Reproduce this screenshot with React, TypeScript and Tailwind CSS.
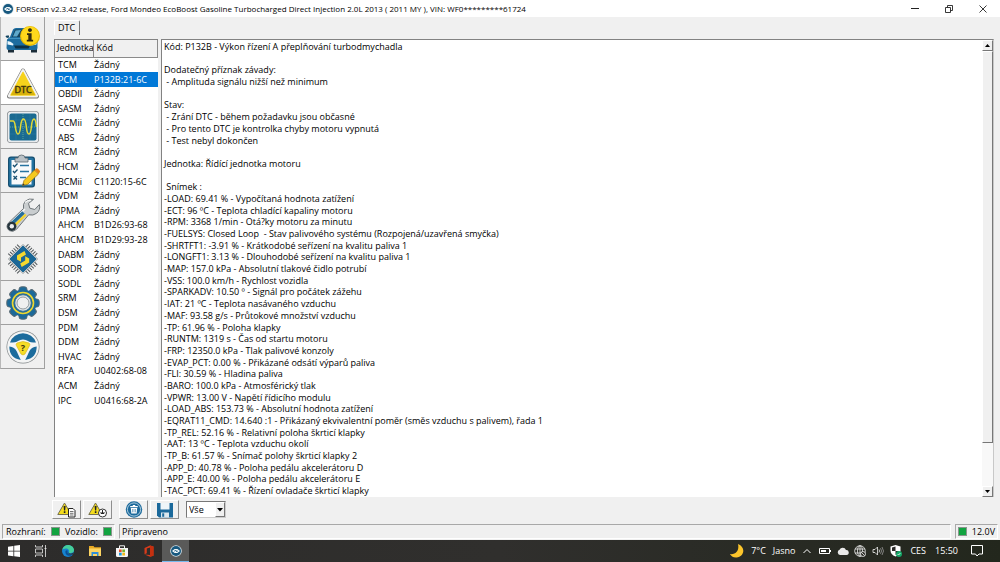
import type { ReactNode } from 'react';

import clsx from 'clsx';

const units: [string, string][] = [
  ['TCM', 'Žádný'],
  ['PCM', 'P132B:21-6C'],
  ['OBDII', 'Žádný'],
  ['SASM', 'Žádný'],
  ['CCMii', 'Žádný'],
  ['ABS', 'Žádný'],
  ['RCM', 'Žádný'],
  ['HCM', 'Žádný'],
  ['BCMii', 'C1120:15-6C'],
  ['VDM', 'Žádný'],
  ['IPMA', 'Žádný'],
  ['AHCM', 'B1D26:93-68'],
  ['AHCM', 'B1D29:93-28'],
  ['DABM', 'Žádný'],
  ['SODR', 'Žádný'],
  ['SODL', 'Žádný'],
  ['SRM', 'Žádný'],
  ['DSM', 'Žádný'],
  ['PDM', 'Žádný'],
  ['DDM', 'Žádný'],
  ['HVAC', 'Žádný'],
  ['RFA', 'U0402:68-08'],
  ['ACM', 'Žádný'],
  ['IPC', 'U0416:68-2A'],
];

const report = [
  'Kód: P132B - Výkon řízení A přeplňování turbodmychadla',
  '',
  'Dodatečný příznak závady:',
  ' - Amplituda signálu nižší než minimum',
  '',
  'Stav:',
  ' - Zrání DTC - během požadavku jsou občasné',
  ' - Pro tento DTC je kontrolka chyby motoru vypnutá',
  ' - Test nebyl dokončen',
  '',
  'Jednotka: Řídící jednotka motoru',
  '',
  ' Snímek :',
  '-LOAD: 69.41 % - Vypočítaná hodnota zatížení',
  '-ECT: 96 ºC - Teplota chladící kapaliny motoru',
  '-RPM: 3368 1/min - Otá?ky motoru za minutu',
  '-FUELSYS: Closed Loop  - Stav palivového systému (Rozpojená/uzavřená smyčka)',
  '-SHRTFT1: -3.91 % - Krátkodobé seřízení na kvalitu paliva 1',
  '-LONGFT1: 3.13 % - Dlouhodobé seřízení na kvalitu paliva 1',
  '-MAP: 157.0 kPa - Absolutní tlakové čidlo potrubí',
  '-VSS: 100.0 km/h - Rychlost vozidla',
  '-SPARKADV: 10.50 º - Signál pro počátek zážehu',
  '-IAT: 21 ºC - Teplota nasávaného vzduchu',
  '-MAF: 93.58 g/s - Průtokové množství vzduchu',
  '-TP: 61.96 % - Poloha klapky',
  '-RUNTM: 1319 s - Čas od startu motoru',
  '-FRP: 12350.0 kPa - Tlak palivové konzoly',
  '-EVAP_PCT: 0.00 % - Přikázané odsátí výparů paliva',
  '-FLI: 30.59 % - Hladina paliva',
  '-BARO: 100.0 kPa - Atmosférický tlak',
  '-VPWR: 13.00 V - Napětí řídicího modulu',
  '-LOAD_ABS: 153.73 % - Absolutní hodnota zatížení',
  '-EQRAT11_CMD: 14.640 :1 - Přikázaný ekvivalentní poměr (směs vzduchu s palivem), řada 1',
  '-TP_REL: 52.16 % - Relativní poloha škrticí klapky',
  '-AAT: 13 ºC - Teplota vzduchu okolí',
  '-TP_B: 61.57 % - Snímač polohy škrticí klapky 2',
  '-APP_D: 40.78 % - Poloha pedálu akcelerátoru D',
  '-APP_E: 40.00 % - Poloha pedálu akcelerátoru E',
  '-TAC_PCT: 69.41 % - Řízení ovladače škrticí klapky',
];

function AppLogo({ className }: { className?: string }) {
  return (
    <svg viewBox="0 0 12 12" className={className}>
      <circle cx="6" cy="6" r="5.8" fill="#d5e3ea" />
      <circle cx="6" cy="6" r="5" fill="#17587f" />
      <path d="M2 6 4.600 4h2.800L10 6 7.400 8H4.600z" fill="#f4f9fb" />
      <path d="M4 6h1.200l.7-1 .8 2 .6-1H8" fill="none" stroke="#17587f" strokeWidth=".7" />
    </svg>
  );
}

function CarIcon() {
  return (
    <svg viewBox="0 0 40 40" className="size-10">
      <path d="M5 29h6v4.500H5zM28 29h6v4.500h-6z" fill="#1b2c38" />
      <path d="M4 20.500 7 18l3-7.500Q11 9 13 9h13q2 0 3 2l3 7 2.500 3v8q0 2-2 2h-27q-2 0-2-2z" fill="#1c6c9f" />
      <path d="M2.500 17.500q0-1.500 3.500-1v2l-2 .500zM12 10.500h13l3 7.500H9z" fill="#12435f" />
      <path d="m12.600 11.500 5.400-.5-4 6.500H10z" fill="#5fa9cc" />
      <path d="M4.500 22q3 0 6 3l-.5 1.500-5.500-1zM33.500 22q-3 0-5.500 3l.5 1.500 5-1z" fill="#e8f6fc" />
      <path d="M11 26.500h16l-1.500 3h-13z" fill="#0d3147" />
      <path d="M6 19.500h26" stroke="#3f93c2" strokeWidth="1" />
      <circle cx="27" cy="17" r="10" fill="#e5b800" />
      <circle cx="27" cy="16.600" r="9" fill="#ffd91c" />
      <path d="M27 9.200a2 1.900 0 1 1-.1 0zM24 14.300h4.600v6.400h1.500V22.500h-6.300v-1.800h1.500v-4.600H24z" fill="#332c10" />
    </svg>
  );
}

function DtcIcon() {
  return (
    <svg viewBox="0 0 40 40" className="size-10">
      <path d="M20 7.500 34 33.500H6z" fill="#777" stroke="#777" strokeWidth="4" strokeLinejoin="round" />
      <path d="M20 7.500 33.800 33H6.200z" fill="#f2f2f0" stroke="#f2f2f0" strokeWidth="2.800" strokeLinejoin="round" />
      <path d="M20 9.500 32 32H8z" fill="#f6d21c" stroke="#f6d21c" strokeWidth="1.500" strokeLinejoin="round" />
      <path d="M12.800 23h14.400L32 32H8z" fill="#d9b30c" />
      <text x="20" y="30" textAnchor="middle" fontSize="9" fill="#3a330f" stroke="#3a330f" strokeWidth=".4">DTC</text>
    </svg>
  );
}

function WaveIcon() {
  return (
    <svg viewBox="0 0 40 40" className="size-10">
      <rect x="4" y="4" width="32" height="32" rx="4" fill="#6f7478" />
      <rect x="4.600" y="4.600" width="30.800" height="30.800" rx="3.500" fill="#e9ecee" />
      <rect x="6.500" y="6.500" width="27" height="27" rx="2" fill="#1a6a91" />
      <path d="M7 13h26M7 27h26M13 7v26M27 7v26" stroke="#2f7fa5" strokeWidth=".5" />
      <path d="M7 20h26M20 7v26" stroke="#67b29b" strokeWidth=".8" strokeDasharray="1 1" />
      <path d="M7 14h3c2 0 2 4 2.500 7s1 6 2.500 6 2-2 2.500-7 1-8 3-8 2.500 4 3 9 1 6 2.500 6 2-3 2.500-8 1-7 2.500-7 2 3 2.500 8" fill="none" stroke="#e4d936" strokeWidth="1.500" />
    </svg>
  );
}

function TestsIcon() {
  return (
    <svg viewBox="0 0 40 40" className="size-10">
      <rect x="5" y="5.500" width="27" height="31" rx="3" fill="#174f70" />
      <rect x="6.200" y="6.700" width="24.600" height="28.600" rx="2" fill="#2474a2" />
      <path d="M8.500 9h20v24.500h-20z" fill="#f8fafb" />
      <path d="M12 7h3q0-3 3.500-3T22 7h3v4H12z" fill="#b9c1c6" stroke="#59656c" strokeWidth=".8" />
      <path d="M17 14.500h9M17 20.500h9M17 26.500h6" stroke="#2673a0" strokeWidth="1.600" />
      <path d="m10 14 1.500 1.700 3-3.200M10 20l1.500 1.700 3-3.200M10.500 25l3.500 3.500M14 25l-3.500 3.500" fill="none" stroke="#174f70" strokeWidth="1.300" />
      <path d="m19.500 34.500 1.500-5L31.500 19l4 4L24.700 33.300z" fill="#f5c920" stroke="#946f12" strokeWidth=".7" />
      <path d="m31.500 19 1.500-1.400q1-.8 2 .2l1.600 1.600q1 1 0 2L35.500 23z" fill="#e78518" />
      <path d="m19.500 34.500.6-2.200 1.600 1.600z" fill="#333" />
    </svg>
  );
}

function WrenchIcon() {
  return (
    <svg viewBox="0 0 40 40" className="size-10">
      <path d="M30.500 4.300 25.500 8.500l1.300 4.700 5 1.300 4.600-5q1.300 5.500-2.700 8.700-3.600 2.800-8 1.600L13.500 34.300q-3.500 3.400-7.300 1.300-4-3.600-.8-7.600L20.500 13.500q-1-4.500 2-7.500 3.500-3 8-1.700z" fill="#c9cdcf" stroke="#70777b" strokeWidth="1" />
      <path d="M22 7.500q3-2.500 6-2M22 14 9 26.500" fill="none" stroke="#f6f7f7" strokeWidth="1.400" />
      <path d="M20.500 17.500 8 29.500" stroke="#266f9b" strokeWidth="3.600" />
      <path d="m22.800 19.500-12 11.800" stroke="#f2d22c" strokeWidth="2.400" />
      <circle cx="8.800" cy="31.300" r="4.600" fill="#25343d" />
      <circle cx="8.800" cy="31.300" r="2.200" fill="#eceeef" />
    </svg>
  );
}

function ChipIcon() {
  return (
    <svg viewBox="0 0 40 40" className="size-10">
      <path d="M6.500 16.500l10-10M23.500 6.500l10 10M6.500 23.500l10 10M23.500 33.500l10-10" stroke="#4f5558" strokeWidth="4.500" strokeDasharray="1 1.500" />
      <path d="M20 5.500 34.500 20 20 34.500 5.500 20z" fill="#f0f2f3" stroke="#8d9497" strokeWidth="1" strokeLinejoin="round" />
      <path d="M20 7 33 20 20 33 7 20z" fill="#1b6797" stroke="#1b6797" strokeWidth="1" strokeLinejoin="round" />
      <path d="m21.500 12-7.500 4.500v4l4 2.200v-4.200l5-3zM18.700 28l7.500-4.500v-4l-4-2.200v4.200l-5 3z" fill="#f5d92e" />
    </svg>
  );
}

function GearIcon() {
  return (
    <svg viewBox="0 0 40 40" className="size-10">
      {[0, 45, 90, 135].map((angle) => (
        <rect key={angle} x="16" y="3.800" width="8" height="32.400" rx="2.500" fill="#1d6a99" stroke="#596a74" strokeWidth="1" transform={`rotate(${angle} 20 20)`} />
      ))}
      <circle cx="20" cy="20" r="13.500" fill="#1d6a99" />
      <circle cx="20" cy="20" r="10.500" fill="none" stroke="#edd72f" strokeWidth="1.600" />
      <circle cx="20" cy="20" r="8.200" fill="#dfe4e7" stroke="#3c708e" strokeWidth=".8" />
      <circle cx="20" cy="20" r="6" fill="#f0f0f0" stroke="#7f888c" strokeWidth=".8" />
    </svg>
  );
}

function WheelIcon() {
  return (
    <svg viewBox="0 0 40 40" className="size-10">
      <circle cx="20" cy="20" r="16.500" fill="#818789" />
      <circle cx="20" cy="20" r="15.800" fill="#f4f5f5" />
      <path d="M7 15.500a13.800 13.800 0 0 1 26 0q-6 0-8-1.500t-5-1.500-5 1.500-8 1.500zM6.300 19.500q5.500.5 7.500 5t4 8.500q-11.500-2-11.500-13.500zM33.700 19.500q-5.500.5-7.500 5t-4 8.500q11.500-2 11.500-13.500z" fill="#1c6c9d" />
      <path d="M14 16q6-3 12 0 1.500 1 .6 2.600L22 27q-2 2-4 0l-4.600-8.400q-.9-1.600.6-2.600z" fill="#f6dc26" stroke="#d2b314" strokeWidth=".6" />
      <text x="20" y="24" textAnchor="middle" fontSize="9" fontWeight="700" fill="#3b3410">?</text>
    </svg>
  );
}

const tools: { label: string; icon: ReactNode }[] = [
  { label: 'Vozidlo', icon: <CarIcon /> },
  { label: 'DTC', icon: <DtcIcon /> },
  { label: 'Grafy', icon: <WaveIcon /> },
  { label: 'Testy', icon: <TestsIcon /> },
  { label: 'Servis', icon: <WrenchIcon /> },
  { label: 'Moduly', icon: <ChipIcon /> },
  { label: 'Nastavení', icon: <GearIcon /> },
  { label: 'Nápověda', icon: <WheelIcon /> },
];

function TitleBar() {
  return (
    <header className="flex h-[17px] shrink-0 items-center bg-white pl-0.5">
      <AppLogo className="size-3" />
      <h1 className="ml-0.5 flex-1 truncate text-[8px] leading-3">
        FORScan v2.3.42 release, Ford Mondeo EcoBoost Gasoline Turbocharged Direct Injection 2.0L 2013 ( 2011 MY ), VIN: WF0*********61724
      </h1>
      <button type="button" aria-label="Minimalizovat" className="flex h-full w-[34px] items-center justify-center">
        <svg viewBox="0 0 8 8" className="size-2"><path d="M0 3.500h8" stroke="#222" /></svg>
      </button>
      <button type="button" aria-label="Obnovit" className="flex h-full w-[33px] items-center justify-center">
        <svg viewBox="0 0 8 8" className="size-2" fill="none" stroke="#222" strokeWidth=".9"><path d="M.5 2.500h5v5h-5zM2.500 2.500v-2h5v5h-2" /></svg>
      </button>
      <button type="button" aria-label="Zavřít" className="flex h-full w-[35px] items-center justify-center">
        <svg viewBox="0 0 8 8" className="size-2"><path d="m.5.500 7 7m0-7-7 7" stroke="#222" strokeWidth=".9" /></svg>
      </button>
    </header>
  );
}

function Sidebar() {
  return (
    <nav className="flex w-[46px] shrink-0 flex-col">
      {tools.map((tool, i) => (
        <button
          key={tool.label}
          type="button"
          aria-label={tool.label}
          className={clsx(
            'flex h-11 w-[45px] items-center justify-center border-r border-b border-l border-r-[#a0a0a0] border-b-[#a0a0a0] border-l-[#b8b8b8]',
            i === 1 ? 'bg-white' : 'bg-[#f0f0f0]',
          )}
        >
          {tool.icon}
        </button>
      ))}
    </nav>
  );
}

function UnitTable() {
  return (
    <div className="w-[104px] shrink-0 overflow-hidden border-t border-l border-[#828282] bg-white">
      <table className="h-[368px] w-full table-fixed border-collapse text-left">
        <thead>
          <tr className="h-[17px] bg-[#f0f0f0]">
            <th className="w-[38px] overflow-hidden border-r border-b border-[#8a8a8a] p-0 pl-0.5 font-normal whitespace-nowrap">Jednotka</th>
            <th className="border-r border-b border-[#8a8a8a] p-0 pl-[3px] font-normal">Kód</th>
          </tr>
        </thead>
        <tbody>
          {units.map(([unit, code], i) => (
            <tr key={i} className={clsx(i === 1 && 'bg-[#0078d7] text-white')}>
              <td className="p-0 pl-[3px]">{unit}</td>
              <td className="p-0 pl-px whitespace-nowrap">{code}</td>
            </tr>
          ))}
        </tbody>
      </table>
    </div>
  );
}

function ScrollButton({ up }: { up?: boolean }) {
  return (
    <button
      type="button"
      aria-label={up ? 'Nahoru' : 'Dolů'}
      className="flex h-[11px] shrink-0 items-center justify-center border border-t-white border-r-[#777] border-b-[#777] border-l-white bg-[#f0f0f0]"
    >
      <svg viewBox="0 0 5 3" className="h-[3px] w-[5px]"><path d={up ? 'M0 3 2.500 0 5 3z' : 'M0 0h5L2.500 3z'} /></svg>
    </button>
  );
}

function Report() {
  return (
    <div className="flex min-w-0 flex-1 border-t border-r border-l border-t-[#828282] border-r-[#c8c8c8] border-l-[#828282] bg-white">
      <div className="min-w-0 flex-1 overflow-hidden pt-px pl-0.5">
        <div className="flex h-full flex-col">
          {report.map((line, i) => (
            <p key={i} className="min-h-0 flex-1 leading-3 whitespace-pre">{line}</p>
          ))}
        </div>
      </div>
      <div className="flex w-[11px] flex-col bg-[#f8f8f8]">
        <ScrollButton up />
        <div className="flex-9 border border-t-white border-r-[#777] border-b-[#777] border-l-white bg-[#f0f0f0]" />
        <div className="flex-1" />
        <ScrollButton />
      </div>
    </div>
  );
}

function ToolButton({ label, children }: { label: string; children: ReactNode }) {
  return (
    <button
      type="button"
      aria-label={label}
      className="flex h-[19px] w-[29px] items-center justify-center border border-t-white border-r-[#8e8e8e] border-b-[#8e8e8e] border-l-white"
    >
      {children}
    </button>
  );
}

function Warning() {
  return (
    <>
      <path d="M7.500 1 14.200 12.500H.8z" fill="#f4dc1d" stroke="#77734f" strokeWidth="1" strokeLinejoin="round" />
      <path d="M6.600 4h2l-.4 4.500H7zM6.800 9.300h1.600V11H6.800z" fill="#222" />
    </>
  );
}

function Toolbar() {
  return (
    <div className="flex h-[25px] items-center gap-[7px] pl-0.5">
      <div className="flex gap-0.5">
        <ToolButton label="Číst DTC">
          <svg viewBox="0 0 20 16" className="h-4 w-5">
            <Warning />
            <path d="M11.500 6.500h4.500l2 2V15h-6.500z" fill="#fff" stroke="#222" strokeWidth="1" />
            <path d="M13 9.500h3.500M13 11.300h3.500M13 13h3.500" stroke="#333" strokeWidth=".7" />
          </svg>
        </ToolButton>
        <ToolButton label="Sledovat DTC">
          <svg viewBox="0 0 20 16" className="h-4 w-5">
            <Warning />
            <circle cx="14.500" cy="11" r="4" fill="#fff" stroke="#333" strokeWidth="1" />
            <path d="M14.500 8v3.500M13 10v1.500h3V10" fill="none" stroke="#222" strokeWidth="1" />
          </svg>
        </ToolButton>
      </div>
      <div className="flex gap-0.5">
        <ToolButton label="Smazat DTC">
          <svg viewBox="0 0 18 18" className="h-[17px] w-[18px]">
            <circle cx="9" cy="9" r="8.700" fill="#1b699b" />
            <circle cx="9" cy="9" r="7" fill="none" stroke="#d8eaf3" strokeWidth=".8" />
            <path d="M5 5.200h2.700V4.300h2.600v.9H13v1.300H5zM5.600 7.300h6.800l-.6 6H6.200z" fill="#fff" />
            <path d="M7.800 8.500v3.500M10.200 8.500v3.500" stroke="#1b699b" strokeWidth=".8" />
          </svg>
        </ToolButton>
        <ToolButton label="Uložit">
          <svg viewBox="0 0 16 16" className="size-4">
            <path d="M0 1h16v14.500H2L0 13.500z" fill="#1b699b" />
            <path d="M3.500 1h9v6.500h-9z" fill="#eef5f9" />
            <path d="M4 10.500h8v5H4z" fill="#dbe7ee" />
            <path d="M5.200 11.300h2v3.500h-2z" fill="#1b699b" />
          </svg>
        </ToolButton>
      </div>
      <div className="relative">
        <select
          aria-label="Filtr"
          defaultValue="all"
          className="h-[17px] w-10 appearance-none border border-t-[#777] border-r-[#ccc] border-b-[#ccc] border-l-[#777] bg-white pl-0.5"
        >
          <option value="all">Vše</option>
        </select>
        <span className="pointer-events-none absolute inset-y-px right-px flex w-2.5 items-center justify-center border border-t-white border-r-[#777] border-b-[#777] border-l-white bg-[#f0f0f0]">
          <svg viewBox="0 0 6 4" className="h-1 w-1.5"><path d="M0 0h6L3 3.500z" /></svg>
        </span>
      </div>
    </div>
  );
}

function Lamp() {
  return <span className="size-[9px] shrink-0 border border-[#8a958d] bg-[#12a340]" />;
}

function StatusBar() {
  const cell = 'flex items-center border border-t-[#a8a8a8] border-r-white border-b-white border-l-[#a8a8a8]';
  return (
    <footer className="flex h-4 shrink-0 gap-1 px-0.5 pb-px">
      <div className={clsx(cell, 'w-[113px] justify-between pr-0.5 pl-[3px]')}>
        Rozhraní: <Lamp /> Vozidlo: <Lamp />
      </div>
      <div className={clsx(cell, 'flex-1 pl-0.5')}>Připraveno</div>
      <div className={clsx(cell, 'w-[43px] justify-between px-0.5')}>
        <Lamp /> 12.0V
      </div>
    </footer>
  );
}

const apps: { label: string; icon: ReactNode }[] = [
  {
    label: 'Start',
    icon: <path d="M0 1.700 5.400.900v4.800H0zM6.200.800 12 0v5.700H6.200zM0 6.400h5.400v4.800L0 10.400zM6.200 6.400H12V12l-5.800-.8z" fill="#fff" />,
  },
  {
    label: 'Zobrazení úkolů',
    icon: <path d="M.5 0v2h7V0M.5 12v-2h7v2M.5 4h7v4h-7zM10.500 0v12M9.500 3.500h2" fill="none" stroke="#e8e8e8" strokeWidth=".8" />,
  },
  {
    label: 'Edge',
    icon: (
      <>
        <circle cx="6" cy="6" r="6" fill="#1682cf" />
        <path d="M.2 5C1 1.500 3.500 0 6 0c3.500 0 6 2.500 6 5 0 2-1.500 3-3.200 3S6.500 7.500 7 7C8 5.500 6 3.500 4 3.500 2 3.500.700 4.300.200 5z" fill="#45cf9c" />
        <path d="M3.500 6C3 9 5 11 8 10.800c1.400 0 2.500-.6 3-1.500-2 .9-5.500.5-5.500-2.300 0-.5.2-1 .5-1.300C5.200 5 4 5 3.500 6z" fill="#0b4f93" />
        <path d="M6.800 7.200c-.5.600.500 1.600 2.400 1.400 1.200-.1 2.200-.7 2.600-1.600L11 9.300c-2 .7-4.500.2-4.800-1.600z" fill="#2b2b29" />
      </>
    ),
  },
  {
    label: 'Průzkumník',
    icon: (
      <>
        <path d="M0 1h4.500l1 1.200H12V11H0z" fill="#e8a922" />
        <path d="M0 3.500h12V11H0z" fill="#fcd462" />
        <path d="M2.500 7h7v4H8V9H4v2H2.500z" fill="#2f8ed9" />
      </>
    ),
  },
  {
    label: 'Store',
    icon: (
      <>
        <path d="M3.500 3V.800h5V3" fill="none" stroke="#f2f2f2" strokeWidth="1" />
        <path d="M0 3h12v7.500Q12 12 10.500 12h-9Q0 12 0 10.500z" fill="#f5f5f5" />
        <path d="M3 4.500h2.700v2.700H3z" fill="#e64b24" />
        <path d="M6.300 4.500H9v2.700H6.300z" fill="#75b22b" />
        <path d="M3 7.800h2.700v2.700H3z" fill="#1d9bdc" />
        <path d="M6.300 7.800H9v2.700H6.300z" fill="#f3b719" />
      </>
    ),
  },
  {
    label: 'Office',
    icon: (
      <>
        <path d="M1.500 3 7 .500l3.500 1v9.300L7 11.800 1.500 9.500 7 10V2.500L3.800 3.400v4.800l-2.300 1z" fill="#d83b1b" />
        <path d="m7 .500 3.500 1v9.300L7 11.800z" fill="#c5300f" />
      </>
    ),
  },
];

function TaskBar() {
  return (
    <div className="flex h-[22px] shrink-0 bg-linear-to-r from-[#2d2c2b] via-[#302f2d] to-[#23271d] text-white">
      <div className="flex flex-1">
        {apps.map((app) => (
          <button key={app.label} type="button" aria-label={app.label} className="flex w-[27px] items-center justify-center">
            <svg viewBox="0 0 12 12" className="size-3">{app.icon}</svg>
          </button>
        ))}
        <button type="button" aria-label="FORScan" className="flex w-[27px] items-center justify-center border-b border-[#76b9ed] bg-[#5a5a59]">
          <AppLogo className="size-3" />
        </button>
      </div>
      <div className="flex items-center">
        <svg viewBox="0 0 14 14" className="size-3.5"><path d="M8 0c8 3 6.500 13-1.500 13.500C3 13.700 1 12 0 10c6 1 9.500-4 8-10z" fill="#fcc52b" /></svg>
        <span className="ml-[7px]">7°C</span>
        <span className="ml-[7px]">Jasno</span>
        <svg viewBox="0 0 8 8" className="ml-2 size-2"><path d="m.5 6 3.500-3.500L7.500 6" fill="none" stroke="#fff" strokeWidth="1" /></svg>
        <svg viewBox="0 0 12 8" className="ml-2 h-2 w-3"><path d="M.5 1.500h10v5H.5z" fill="none" stroke="#fff" /><path d="M2 3h5v2H2zM11 3h1v2h-1z" fill="#fff" /></svg>
        <svg viewBox="0 0 12 8" className="ml-1.5 h-2 w-3"><path d="M3 8a2.700 2.700 0 0 1-.5-5.200A3.500 3.500 0 0 1 9 3a2.500 2.500 0 0 1 .5 5z" fill="#e9e9e9" /></svg>
        <svg viewBox="0 0 12 12" className="ml-[5px] size-3" fill="none" stroke="#eee" strokeWidth=".8">
          <circle cx="6" cy="6" r="5.300" /><ellipse cx="6" cy="6" rx="2.500" ry="5.300" /><path d="M1 4h10M1 8h10M6 1v10" />
          <circle cx="9" cy="9" r="2.500" fill="#2a2b25" /><path d="m7.300 7.300 3.400 3.400" />
        </svg>
        <svg viewBox="0 0 12 12" className="ml-1.5 size-3" fill="none" stroke="#eee" strokeWidth=".8">
          <path d="M1 4.500h2L5.500 2v8L3 7.500H1zM7 4.500q1 1.500 0 3" /><path d="M8.500 3.200q2 2.800 0 5.600M10 2q3 4 0 8" stroke="#999" />
        </svg>
        <svg viewBox="0 0 12 12" className="ml-1.5 size-3">
          <path d="M5.500 0 10.500 1.500v4q0 4-5 6-5-2-5-6v-4z" fill="#fff" /><path d="M5.500 1.500V6H2V2.500zM5.500 6H9q-.5 2.500-3.500 4z" fill="#2b2b29" />
          <circle cx="9" cy="9" r="3" fill="#14a667" /><path d="m7.600 9 1 1 1.800-2" fill="none" stroke="#fff" strokeWidth=".8" />
        </svg>
        <span className="ml-2">CES</span>
        <time className="ml-[9px]">15:50</time>
        <button type="button" aria-label="Oznámení" className="mr-[17px] ml-[13px]">
          <svg viewBox="0 0 12 12" className="size-3"><path d="M.5.500h11v8.500H8l-2 2-1.500-2h-4z" fill="none" stroke="#fff" /></svg>
        </button>
      </div>
    </div>
  );
}

export default function App() {
  return (
    <div className="flex h-screen flex-col overflow-hidden bg-[#f0f0f0] font-['Open_Sans','Noto_Sans',sans-serif] text-[9px] leading-3 text-black">
      <TitleBar />
      <div className="flex min-h-0 flex-1">
        <Sidebar />
        <main className="flex min-w-0 flex-1 flex-col pl-1">
          <div role="tablist" className="flex h-[22px] items-end px-1 pt-[3px] pb-1">
            <button type="button" role="tab" aria-selected className="h-full rounded-t-xs border-t border-r border-l border-t-white border-r-[#777] border-l-white pr-1 pl-[3px]">
              DTC
            </button>
          </div>
          <div className="flex min-h-0 flex-1 gap-[3px] pr-1.5 pl-1">
            <UnitTable />
            <Report />
          </div>
          <Toolbar />
        </main>
      </div>
      <div className="h-0.5 shrink-0" />
      <StatusBar />
      <TaskBar />
    </div>
  );
}
